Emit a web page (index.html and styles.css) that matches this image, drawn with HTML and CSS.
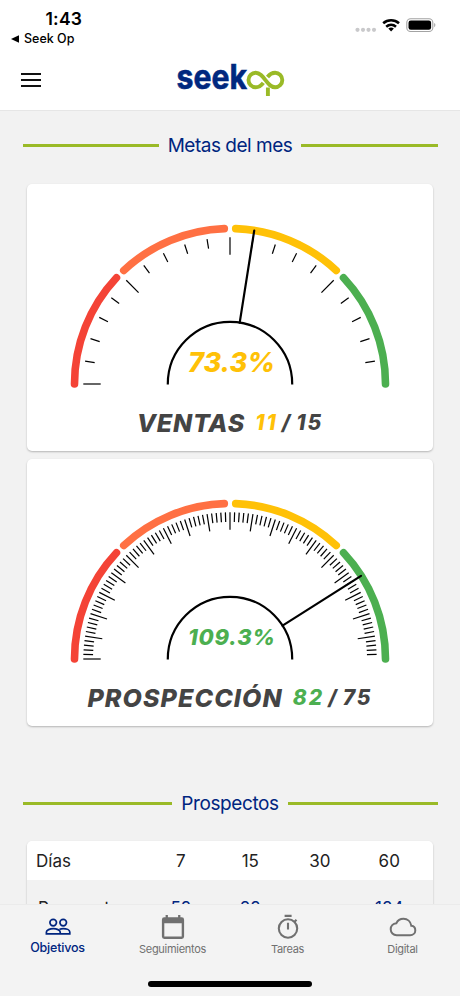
FILE: index.html
```html
<!DOCTYPE html>
<html lang="es">
<head>
    <meta charset="UTF-8">
    <meta name="viewport" content="width=device-width, initial-scale=1.0">
    <title>Seekop - Objetivos</title>
    <link rel="stylesheet" href="styles.css">
</head>
<body>
    <div class="app">
        <div class="status-bar">
            <div class="status-left">
                <div class="time">1:43</div>
                <div class="back">
                    <svg width="8" height="8" viewBox="0 0 8 8"><path d="M8 0.3v7.4L0 4z"/></svg>
                    <span>Seek Op</span>
                </div>
            </div>
            <svg class="status-icons" width="82" height="18" viewBox="0 0 82 18">
                <g fill="#c9c9cb">
                    <circle cx="2.5" cy="13.8" r="2.1"/>
                    <circle cx="8" cy="13.8" r="2.1"/>
                    <circle cx="13.5" cy="13.8" r="2.1"/>
                    <circle cx="19" cy="13.8" r="2.1"/>
                </g>
                <g fill="none" stroke="#000" stroke-width="2.6">
                    <path d="M28.2 7.2a12.2 12.2 0 0 1 15.8 0"/>
                    <path d="M31.2 10.7a7.6 7.6 0 0 1 9.8 0"/>
                </g>
                <path d="M33.3 12.6a4.5 4.5 0 0 1 5.600 0L36.1 15.5z"/>
                <rect x="51.8" y="2.7" width="26" height="12.8" rx="3.8" fill="none" stroke="#a3a3a3" stroke-width="1.1"/>
                <rect x="53.5" y="4.4" width="22.6" height="9.4" rx="2.3"/>
                <path d="M79.2 7v4.2c1.6-.7 1.6-3.5 0-4.2z" fill="#a3a3a3"/>
            </svg>
        </div>

        <header class="header">
            <svg class="menu" width="20" height="14" viewBox="0 0 20 14"><path d="M0 1h20M0 7h20M0 13h20" stroke="#111" stroke-width="2"/></svg>
            <svg class="logo" width="110" height="36" viewBox="0 0 110 36">
                <text class="logo-text" x="0.6" y="27" textLength="70.5" lengthAdjust="spacingAndGlyphs">seek</text>
                <g fill="none" stroke="#9aba27" stroke-width="3.9">
                    <path d="M87.3 20.8C85.2 23.6 83 25.2 79.7 25.2a7.2 7.2 0 0 1 0-14.4c8.4 0 10.8 14.4 19.4 14.4a7.2 7.2 0 0 0 0-14.4c-3.4 0-5.6 1.7-7.6 4.2"/>
                    <path d="M91.9 25.5V34"/>
                </g>
            </svg>
        </header>

        <main class="content">
            <h2 class="section-title"><span>Metas del mes</span></h2>

            <section class="card">
                <svg class="gauge" data-ticks="20" data-major="5" data-value="73.3" width="406" height="209" viewBox="0 0 406 209">
                    <g class="arcs"></g>
                    <g class="ticks"></g>
                    <path class="hub" d="M140.8 200.5V200a62.2 62.2 0 0 1 124.4 0V200.5"/>
                    <text class="percent yellow" x="161" y="188" textLength="87">73.3%</text>
                </svg>
                <div class="goal">
                    <span class="name ventas">VENTAS</span>
                    <span class="count"><b class="yellow">11</b> / 15</span>
                </div>
            </section>

            <section class="card">
                <svg class="gauge" data-ticks="100" data-major="5" data-value="109.3" width="406" height="209" viewBox="0 0 406 209">
                    <g class="arcs"></g>
                    <g class="ticks"></g>
                    <path class="hub" d="M140.8 200.5V200a62.2 62.2 0 0 1 124.4 0V200.5"/>
                    <text class="percent small green" x="161" y="186" textLength="87">109.3%</text>
                </svg>
                <div class="goal">
                    <span class="name prospeccion">PROSPECCIÓN</span>
                    <span class="count"><b class="green">82</b> / 75</span>
                </div>
            </section>

            <h2 class="section-title prospectos"><span>Prospectos</span></h2>

            <div class="table">
                <div class="row head">
                    <span>Días</span><span>7</span><span>15</span><span>30</span><span>60</span>
                </div>
                <div class="row">
                    <span>Prospectos</span><span>52</span><span>82</span><span></span><span>184</span>
                </div>
            </div>
        </main>

        <nav class="tabs">
            <a class="tab active">
                <svg width="26" height="26" viewBox="0 0 26 26" fill="none" stroke="currentColor" stroke-width="1.7">
                    <circle cx="8.2" cy="8.6" r="3.3"/>
                    <circle cx="18.2" cy="8.6" r="3.3"/>
                    <path d="M1.4 19.9V18c0-2 3.6-3.3 6.9-3.3s6.9 1.3 6.9 3.3v1.9zM14.5 15.3c1.2-.4 2.5-.6 3.7-.6 3.3 0 6.6 1.3 6.6 3.3v1.9h-9.6"/>
                </svg>
                <span>Objetivos</span>
            </a>
            <a class="tab">
                <svg width="26" height="26" viewBox="0 0 26 26">
                    <path fill="currentColor" d="M5.6 1v2.3H4.3A2.4 2.4 0 0 0 1.9 5.7v16.8a2.4 2.4 0 0 0 2.4 2.4h17.4a2.4 2.4 0 0 0 2.4-2.4V5.7a2.4 2.4 0 0 0-2.4-2.4h-1.3V1h-2.3v2.3H7.9V1zM4.3 9.2h17.4v13.3H4.3z"/>
                </svg>
                <span>Seguimientos</span>
            </a>
            <a class="tab">
                <svg width="26" height="26" viewBox="0 0 26 26" fill="none" stroke="currentColor" stroke-width="2.1">
                    <circle cx="13" cy="14.5" r="9.2"/>
                    <path d="M9.6 1.9h7M13 8.8v6.6M19.3 8l2.2-2.2"/>
                </svg>
                <span>Tareas</span>
            </a>
            <a class="tab">
                <svg width="28" height="26" viewBox="0 0 28 26" fill="none" stroke="currentColor" stroke-width="2">
                    <path d="M22.3 11.7C21.7 7.5 18.4 4.8 14.5 4.8c-3.2 0-5.9 1.7-7.2 4.5C4 9.7 1.7 12.2 1.7 15.2c0 3.3 2.6 6 6 6h13.4c2.8 0 5.2-2.1 5.2-4.8 0-2.6-1.7-4.5-4-4.7z"/>
                </svg>
                <span>Digital</span>
            </a>
        </nav>
        <div class="home-indicator"></div>
    </div>
    <script src="gauge.js"></script>
</body>
</html>
```

FILE: styles.css
```css
body {
    margin: 0;
    font-family: 'Inter', 'Liberation Sans', sans-serif;
    color: #222;
    background-color: #f2f2f2;
}
.app {
    width: 460px;
    height: 996px;
    display: flex;
    flex-direction: column;
    overflow: hidden;
}
.status-bar {
    height: 50px;
    flex: none;
    display: flex;
    justify-content: space-between;
    background-color: #fff;
    color: #000;
}
.status-left {
    padding: 8px 0 0 11px;
}
.time {
    padding-left: 34.5px;
    font-size: 17.5px;
    line-height: 21px;
    font-weight: 600;
    letter-spacing: 0.2px;
}
.back {
    display: flex;
    align-items: center;
    gap: 5px;
    margin-top: 1px;
    font-size: 12.5px;
    line-height: 17px;
    font-weight: 450;
}
.status-icons {
    margin: 16px 23px 0 0;
}
.header {
    height: 61px;
    flex: none;
    box-sizing: border-box;
    display: flex;
    align-items: flex-start;
    background-color: #fff;
    border-bottom: 1px solid #e6e6e6;
}
.menu {
    margin: 23px 0 0 21px;
}
.logo {
    margin: 12px 0 0 135px;
    overflow: visible;
}
.logo-text {
    font-size: 34px;
    font-weight: 700;
    fill: #00287f;
    stroke: #00287f;
    stroke-width: 0.6;
}
.content {
    flex: 1;
    min-height: 0;
    overflow: hidden;
}
.section-title {
    display: flex;
    align-items: center;
    gap: 9px;
    margin: 22px 22.5px 26.5px;
    font-size: 19px;
    line-height: 24px;
    font-weight: 400;
    letter-spacing: -0.48px;
    color: #00257f;
}
.section-title::before,
.section-title::after {
    content: "";
    flex: 1;
    height: 3px;
    background-color: #9aba27;
}
.section-title span {
    position: relative;
    top: 1px;
}
.section-title.prospectos {
    margin: 65px 22.5px 26px;
    letter-spacing: -0.4px;
}
.card {
    height: 267px;
    box-sizing: border-box;
    margin: 0 27px 8.5px;
    background-color: #fff;
    border-radius: 5px;
    box-shadow: 0 1px 2px rgba(0, 0, 0, 0.25);
}
.gauge {
    display: block;
}
.arcs path {
    fill: none;
    stroke-width: 7.6;
    stroke-linecap: round;
}
.ticks line {
    stroke: #000;
    stroke-width: 1.2;
}
.hub,
.needle {
    fill: none;
    stroke: #000;
    stroke-width: 2.2;
    stroke-linecap: round;
}
.hub {
    stroke-linecap: butt;
}
.percent {
    font-size: 27px;
    font-weight: 800;
    font-style: italic;
}
.percent.small {
    font-size: 22px;
}
.yellow {
    color: #ffc107;
    fill: #ffc107;
}
.green {
    color: #4caf50;
    fill: #4caf50;
}
.goal {
    display: flex;
    justify-content: center;
    align-items: center;
    gap: 10px;
    height: 60px;
    line-height: 30px;
    font-style: italic;
    font-weight: 800;
    color: #444;
}
.name {
    font-size: 25px;
}
.ventas {
    letter-spacing: 0.8px;
}
.prospeccion {
    letter-spacing: 1.1px;
}
.count {
    font-size: 21px;
    letter-spacing: 2px;
    word-spacing: -2.5px;
}
.count b {
    font-weight: 800;
}
.table {
    height: 200px;
    margin: 0 27px;
    border-radius: 5px;
    overflow: hidden;
    box-shadow: 0 1px 2px rgba(0, 0, 0, 0.25);
}
.row {
    display: grid;
    grid-template-columns: 119px repeat(4, 69.5px);
    align-items: center;
    height: 55px;
    font-size: 17px;
    color: #00257f;
}
.row.head {
    height: 39px;
    background-color: #fff;
    color: #222;
}
.row span {
    text-align: center;
}
.row span:first-child {
    padding-left: 11px;
    text-align: left;
    color: #222;
}
.row.head span:first-child {
    padding-left: 9px;
}
.tabs {
    height: 92px;
    flex: none;
    box-sizing: border-box;
    display: grid;
    grid-template-columns: repeat(4, 1fr);
    padding-top: 9px;
    border-top: 1px solid #ebebeb;
    background-color: #f3f3f3;
}
.tab {
    display: flex;
    flex-direction: column;
    align-items: center;
    gap: 2px;
    font-size: 11px;
    line-height: 14px;
    letter-spacing: -0.3px;
    color: #707070;
}
.tab.active {
    gap: 1px;
    font-size: 12.5px;
    font-weight: 500;
    letter-spacing: -0.2px;
    color: #00257f;
}
.home-indicator {
    position: absolute;
    left: 148px;
    top: 981px;
    width: 164px;
    height: 6px;
    border-radius: 3px;
    background-color: #000;
}
```

FILE: gauge.js
```js
var NS = 'http://www.w3.org/2000/svg';
var CX = 203, CY = 200, R = 155.5;

// 0 is the left end of the dial, 180 the right end
function point(angle, r) {
    var a = angle * Math.PI / 180;
    return [CX - Math.cos(a) * r, CY - Math.sin(a) * r];
}

function line(parent, angle, r1, r2, cls) {
    var p = point(angle, r1), q = point(angle, r2);
    var el = document.createElementNS(NS, 'line');
    el.setAttribute('x1', p[0]);
    el.setAttribute('y1', p[1]);
    el.setAttribute('x2', q[0]);
    el.setAttribute('y2', q[1]);
    if (cls) el.setAttribute('class', cls);
    parent.appendChild(el);
}

var segments = [
    [0, 43.1, '#f44336'],
    [46.9, 87.9, '#ff7043'],
    [92.1, 133.1, '#ffc107'],
    [136.9, 180, '#4caf50']
];

document.querySelectorAll('.gauge').forEach(gauge => {
    var arcs = gauge.querySelector('.arcs');
    segments.forEach(s => {
        var path = document.createElementNS(NS, 'path');
        path.setAttribute('d', 'M' + point(s[0], R) + 'A' + R + ' ' + R + ' 0 0 1 ' + point(s[1], R));
        path.setAttribute('stroke', s[2]);
        arcs.appendChild(path);
    });

    var ticks = gauge.querySelector('.ticks');
    var total = Number(gauge.dataset.ticks);
    for (var i = 0; i < total; i++) {
        line(ticks, i * 180 / total, 146.7, i % gauge.dataset.major === 0 ? 129.3 : 137);
    }

    // the dial ends at 133.3%
    line(gauge, gauge.dataset.value / 133.3 * 180, 62.2, 155.2, 'needle');
});
```
